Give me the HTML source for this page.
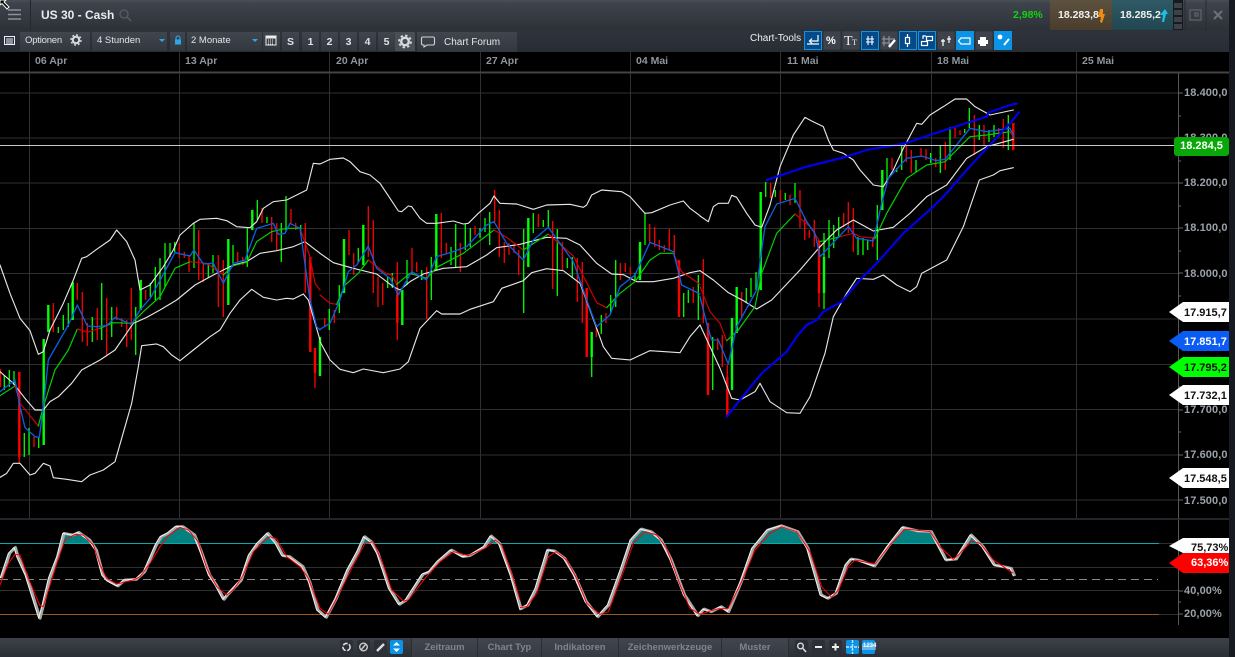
<!DOCTYPE html>
<html><head><meta charset="utf-8"><style>
html,body{margin:0;padding:0;background:#000;width:1235px;height:657px;overflow:hidden;font-family:"Liberation Sans",sans-serif}
.a{position:absolute;white-space:nowrap}
#top{left:0;top:0;width:1229px;height:31px;background:linear-gradient(#4a4f56 0,#3f444c 3px,#2c3138 100%)}
#row{left:0;top:31px;width:1229px;height:21px;background:linear-gradient(#2f343c,#282d34)}
#strip{left:1229px;top:0;width:6px;height:657px;background:#171a20}
.b{position:absolute;top:32px;height:19px;background:linear-gradient(#41464e,#33383f);color:#dfe2e6;font-size:10.5px;line-height:21px;text-align:center}
.t{position:absolute;font-size:10.5px;color:#8f959d;font-weight:bold;transform:scaleY(.95)}
.p{position:absolute;left:1184px;font-size:11px;color:#9ba1a9;font-weight:bold;letter-spacing:.1px}
.m{position:absolute;left:1184px;width:44px;font-size:11px;font-weight:bold;color:#111;text-align:left;line-height:20px}
#bot{left:0;top:638px;width:1229px;height:19px;background:linear-gradient(#3d424a,#2a2e35)}
.tab{position:absolute;top:638px;height:19px;line-height:19px;color:#7f858d;font-size:9.5px;font-weight:bold;text-align:center;background:linear-gradient(#41464e,#363b42);border-left:1px solid #2a2e34;box-sizing:border-box}
.ib{position:absolute;top:640px;width:13px;height:14px;background:#2c3036;border-radius:2px}
</style></head><body>
<div class="a" id="top"></div>
<div class="a" id="row"></div>
<div class="a" id="strip"></div>
<div class="a" style="left:30px;top:0;width:1px;height:30px;background:#24282e"></div>
<div class="a" style="left:41px;top:7px;color:#e9ebee;font-weight:bold;font-size:12px;line-height:16px">US 30 - Cash</div>
<div class="a" style="left:1013px;top:8px;color:#12d312;font-weight:bold;font-size:10.5px;line-height:14px">2,98%</div>
<div class="a" style="left:1050px;top:0;width:62px;height:30px;background:linear-gradient(#5d513f,#4a3d2b)"></div>
<div class="a" style="left:1112px;top:0;width:61px;height:30px;background:linear-gradient(#2f5a66,#214650)"></div>
<div class="a" style="left:1058px;top:8px;color:#f1f1f1;font-weight:bold;font-size:10.5px;line-height:14px">18.283,8</div>
<div class="a" style="left:1120px;top:8px;color:#f1f1f1;font-weight:bold;font-size:10.5px;line-height:14px">18.285,2</div>

<div class="b" style="left:20px;width:70px;z-index:0"></div>
<div class="a" style="left:25px;top:34px;color:#e2e4e8;font-size:9.5px;letter-spacing:-.2px;line-height:14px;z-index:2">Optionen</div>
<div class="b" style="left:92px;width:75px"></div>
<div class="a" style="left:97px;top:34px;color:#e2e4e8;font-size:9.5px;line-height:14px;z-index:2">4 Stunden</div>
<div class="b" style="left:170px;width:15px"></div>
<div class="b" style="left:187px;width:75px"></div>
<div class="a" style="left:191px;top:34px;color:#e2e4e8;font-size:9.5px;line-height:14px;z-index:2">2 Monate</div>
<div class="b" style="left:263px;width:17px"></div>
<div class="b" style="left:282px;width:17px;font-weight:bold">S</div>
<div class="b" style="left:302px;width:17px;font-weight:bold">1</div>
<div class="b" style="left:321px;width:17px;font-weight:bold">2</div>
<div class="b" style="left:340px;width:17px;font-weight:bold">3</div>
<div class="b" style="left:359px;width:17px;font-weight:bold">4</div>
<div class="b" style="left:378px;width:17px;font-weight:bold">5</div>
<div class="b" style="left:395px;width:20px;background:#4a4f56"></div>
<div class="b" style="left:417px;width:100px;height:20px"></div>
<div class="a" style="left:444px;top:36px;color:#e2e4e8;font-size:10px;line-height:14px;z-index:2">Chart Forum</div>
<div class="a" style="left:750px;top:32px;color:#eef0f3;font-size:10px;line-height:14px">Chart-Tools</div>

<!-- tool buttons -->
<svg class="a" style="left:0;top:0;z-index:3" width="1235" height="52" viewBox="0 0 1235 52">
<g fill="none" stroke="#8b9097" stroke-width="1.6"><path d="M8 10H21M8 14.5H21M8 19H21"/></g>
<path d="M0 0L0 5L2 3.5L7 9L9 7L4 2L6 0Z" fill="#000" stroke="#fff" stroke-width="1"/>
<g fill="none" stroke="#555a61" stroke-width="1.4"><circle cx="124" cy="14" r="4"/><path d="M127 17L131 21"/></g>
<!-- arrows -->
<path d="M1100 9h3v5h2l-3 9-2-1 1-5h-3z" fill="#f08a10"/>
<path d="M1162 22l1-7h-3l5-6 3 5h-2l-2 8z" fill="#1bc0e6"/>
<g fill="#171a1f"><rect x="1173" y="0" width="10" height="30"/></g>
<g fill="#3d4249"><rect x="1174" y="3" width="8" height="5"/><rect x="1174" y="10" width="8" height="5"/><rect x="1174" y="17" width="8" height="5"/><rect x="1174" y="24" width="8" height="5"/></g>
<path d="M1185 0V30M1206 0V30" stroke="#272b31"/>
<g fill="none" stroke="#5d6269" stroke-width="1.3"><rect x="1190" y="10" width="11" height="10"/><rect x="1195" y="13" width="3" height="3"/></g>
<path d="M1214 11L1222 19M1222 11L1214 19" stroke="#6c7178" stroke-width="2"/>
<!-- list -->
<g fill="none" stroke="#eef" stroke-width="1"><rect x="4.5" y="36.5" width="10" height="8"/><path d="M6 39H13M6 41H13M6 43H13"/></g>
<!-- gears -->
<circle cx="76" cy="40" r="3.2" fill="none" stroke="#d8dbe0" stroke-width="2"/>
<circle cx="76" cy="40" r="5" fill="none" stroke="#d8dbe0" stroke-width="1.4" stroke-dasharray="2 1.9"/>
<circle cx="405" cy="41.5" r="3.8" fill="none" stroke="#d8dbe0" stroke-width="2.4"/>
<circle cx="405" cy="41.5" r="6" fill="none" stroke="#d8dbe0" stroke-width="1.8" stroke-dasharray="2.4 2.3"/>
<!-- dropdown arrows -->
<path d="M159 39h6l-3 3z M252 39h6l-3 3z" fill="#2aa8ee"/>
<!-- lock -->
<rect x="175" y="39.5" width="6" height="5" fill="#2aa8ee"/><path d="M176 39.5v-1.5a2 2 0 0 1 4 0v1.5" fill="none" stroke="#2aa8ee" stroke-width="1.1"/>
<!-- calendar -->
<rect x="266" y="36" width="10" height="9" fill="none" stroke="#eee"/><rect x="266" y="36" width="10" height="2.5" fill="#eee"/><path d="M268 40h6M268 42h6M268 44h6" stroke="#eee" stroke-dasharray="1 1"/>
<!-- bubble -->
<path d="M423 37h10a1.5 1.5 0 0 1 1.5 1.5v5a1.5 1.5 0 0 1-1.5 1.5h-6l-3 2v-2h-1a1.5 1.5 0 0 1-1.5-1.5v-5a1.5 1.5 0 0 1 1.5-1.5z" fill="none" stroke="#cfd3d8" stroke-width="1.1"/>
<!-- chart tools -->
<g stroke="#0c94e6" stroke-width="1">
<rect x="804.5" y="31.5" width="17" height="18" fill="#054a88"/>
<rect x="823.5" y="31.5" width="17" height="18" fill="#3e434b" stroke="none"/>
<rect x="842.5" y="31.5" width="17" height="18" fill="#3e434b" stroke="none"/>
<rect x="861.5" y="31.5" width="17" height="18" fill="#054a88"/>
<rect x="880.5" y="31.5" width="17" height="18" fill="#3e434b" stroke="none"/>
<rect x="899.5" y="31.5" width="17" height="18" fill="#054a88"/>
<rect x="918.5" y="31.5" width="17" height="18" fill="#054a88"/>
<rect x="937.5" y="31.5" width="17" height="18" fill="#3e434b" stroke="none"/>
<rect x="956.5" y="31.5" width="17" height="18" fill="#0a94e8"/>
<rect x="975.5" y="31.5" width="17" height="18" fill="#3e434b" stroke="none"/>
<rect x="994.5" y="31.5" width="17" height="18" fill="#0a94e8"/>
</g>
<g stroke="#fff" fill="none" stroke-width="1.2">
<path d="M807 44H819M818 35V41H810M812 38.5L809.5 41L812 43.5"/>
<path d="M866 40H874M866 43H874M868 37V46M872 37V46" stroke-width="1.1" transform="translate(0,-1)"/>
<path d="M884 36V46M889 36V46M882 39H895M882 43H890" stroke="#8a8f96"/>
<path d="M889 47L895 40" stroke-width="2.4"/>
<rect x="905.5" y="37.5" width="4" height="6"/><path d="M907.5 34V37M907.5 44V47"/>
<rect x="921.5" y="41.5" width="6" height="4"/><rect x="926.5" y="36.5" width="6" height="4"/><path d="M923 39V36H926"/>
<path d="M943 39V46M949 36V43M941 41H945M947 39H951" />
<path d="M961 38H970V44H961L958.5 41Z"/>
<path d="M1004 45L1009 39" stroke-width="2"/>
</g>
<path d="M980 37h6v3h-6z M978 40h10v4h-10z M980 44h6v2h-6z" fill="#fff"/>
<circle cx="1000" cy="37" r="2.4" fill="#fff"/>
<text x="826" y="44" font-size="11" font-weight="bold" fill="#fff" font-family="Liberation Sans">%</text>
<text x="844" y="45" font-size="14" fill="#eee" font-family="Liberation Serif">T</text>
<text x="852" y="45" font-size="8" fill="#eee" font-family="Liberation Serif">T</text>
</svg>

<!-- time axis -->
<div class="t" style="left:35px;top:55px">06 Apr</div>
<div class="t" style="left:185px;top:55px">13 Apr</div>
<div class="t" style="left:336px;top:55px">20 Apr</div>
<div class="t" style="left:486px;top:55px">27 Apr</div>
<div class="t" style="left:636px;top:55px">04 Mai</div>
<div class="t" style="left:787px;top:55px">11 Mai</div>
<div class="t" style="left:937px;top:55px">18 Mai</div>
<div class="t" style="left:1082px;top:55px">25 Mai</div>

<svg class="a" style="left:0;top:0" width="1229" height="640" viewBox="0 0 1229 640" fill="none">
<g stroke="#303030" stroke-width="1">
<path d="M29.5 52V519M179.5 52V519M329.5 52V519M480.5 52V519M630.5 52V519M780.5 52V519M931.5 52V519M1076.5 52V519"/>
<path d="M0 93H1178M0 138H1178M0 183H1178M0 228.5H1178M0 273.5H1178M0 319H1178M0 364.5H1178M0 409.5H1178M0 455H1178M0 500H1178"/>
<path d="M0 567.5H1178M0 590.5H1178M1159 543.5H1178M1159 614.5H1178"/>
</g>
<path d="M0 72.5H1229" stroke="#444" stroke-width="2"/>
<path d="M0 519H1229" stroke="#22262c" stroke-width="2"/>
<path d="M1178.5 73V519M1178.5 520V625" stroke="#555"/>
<path d="M1178 93h5M1178 116h3M1178 138h5M1178 161h3M1178 183h5M1178 206h3M1178 228h5M1178 251h3M1178 273h5M1178 296h3M1178 319h5M1178 342h3M1178 364h5M1178 387h3M1178 410h5M1178 432h3M1178 455h5M1178 477h3M1178 500h5M1178 591h5M1178 568h3M1178 602h3M1178 614h5" stroke="#666"/>

<!-- candles green -->
<path stroke="#0f0" stroke-width="1.3" d="M4.3 375V390M9.3 370V387M14 371V385M24.3 433V457M29 428V455M38.7 438V448M58.3 327V333M63.3 315V330M68.3 303V327M92.3 317V342M101.7 283V340M111.7 307V337M135.7 307V355M150.3 283V297M155.3 267V300M160 258V300M165 243V287M170 243V257M174.7 242V252M194 223V268M208.3 263V278M213 255V273M233 245V265M247.3 228V267M257.3 200V220M267 217V223M281.3 223V262M286 196V232M300.7 225V235M329.3 309V330M339.3 285V313M358.3 248V263M387.7 277V288M392.3 273V288M407 260V285M421.7 270V280M431.3 257V300M451 247V265M455.7 224V268M465.3 224V250M470.3 228V247M480 228V238M485 218V232M489.7 212V245M523.7 229V313M533.3 213V233M543.3 220V227M548.3 210V227M557.3 229V296M567.3 258V268M572.3 257V278M591.7 332V377M601.3 315V334M610.7 295V313M615.7 260V307M635 273V282M645 213V245M683.7 293V317M688.3 290V303M698.3 275V320M712.7 337V390M746.3 288V303M751 278V297M756 272V290M765.7 182V197M775.3 190V197M785.3 193V200M795 183V203M824 233V309M829 220V258M833.7 225V248M838.7 217V237M858 237V255M863 238V255M867.7 240V250M877.3 205V260M887 158V180M896.7 168V172M901.7 145V170M916 160V172M930.7 153V163M940.3 145V173M950 127V160M964.7 129V133M969.3 108V128M979.3 125V140M989 130V142M994 125V137M1008.3 115V150"/>
<path stroke="#0f0" stroke-width="2.4" d="M43.7 339V445M48.3 305V332M72.7 282V320M140.7 280V310M228.3 239V305M252.3 210V230M320 337V376M344 239V293M363.3 225V265M402.3 290V325M436.3 214V270M528.3 218V267M591.7 332V357M640 242V280M732 318V390M736.7 287V333M760.7 192V290M824 257V293M882.3 170V210"/>
<!-- candles red -->
<path stroke="#f00" stroke-width="1.3" d="M.5 369V387M19.3 372V463M34 437V447M53.3 303V332M77.3 283V300M82.3 292V342M87.3 323V346M97.3 308V340M106.7 298V355M116.7 307V320M121.7 318V327M126.7 320V347M131.3 288V340M145.7 290V300M179.3 243V258M184.3 252V258M189 255V272M198.7 230V280M203.3 263V282M218.3 255V307M223.3 260V317M237.7 252V262M242.7 257V265M262 208V223M271.7 217V242M276.7 223V250M291 209V223M295.7 223V230M305.3 223V293M315 348V388M324.7 318V327M334.3 310V323M349 230V255M353.7 253V275M368.3 206V257M373.3 220V293M378 277V307M382.7 283V305M397.3 262V340M412 248V275M416.7 262V272M426.7 267V319M441.3 213V258M446.3 243V253M460.3 243V272M475 226V235M494.7 190V222M499.3 210V257M504.3 242V263M509 243V255M514 245V253M518.7 250V275M538.3 214V227M552.7 221V289M562.3 242V270M577.3 258V302M582.3 262V323M596.3 327V337M606 313V323M620.3 263V280M625.3 263V272M630.3 267V275M649.7 224V243M654.7 227V247M659.3 240V250M664.3 245V252M669.3 229V250M674.3 235V257M693.3 287V303M703.3 259V323M717.7 338V350M722.3 335V367M727.3 365V415M741.7 292V317M770.7 183V198M780.3 190V202M790 195V205M800 190V228M804.7 217V240M809.3 230V238M814.3 220V247M819 240V307M843.7 213V227M848.3 202V233M853.3 208V252M872.7 237V247M892 158V170M906.3 145V162M911.3 150V173M921 148V157M926 149V160M935.7 158V167M945.3 142V170M955 128V138M960 130V135M974.3 115V155M984 125V145M998.7 128V137M1003.3 119V148"/>
<path stroke="#f00" stroke-width="2.4" d="M19.3 372V457M310.3 257V352M315 348V373M397.3 290V323M586.7 288V357M679 260V317M708 323V395M727.3 377V415M819 240V293M1013.3 123V150"/>

<!-- Section 1: zoom coords -->
<g transform="translate(0,200) scale(.33333)" stroke-linejoin="round" stroke-linecap="round">
<g stroke="#e6e6e6" stroke-width="3.4">
<path d="M0 195L30 280 60 355 90 392 115 463 130 455 150 390 190 310 220 240 245 175 260 170 290 148 330 120 350 90 380 125 405 180 420 270 450 255 490 200 520 150 540 105 580 70 600 58 650 55 680 62 710 80 750 83 770 65 790 25 820 5 860 0 890 -15 920 -30 940 -110 960 -108"/>
<path d="M0 515L40 550 75 595 105 630 130 630 150 605 175 590 215 550 245 510 300 480 345 450 400 370 440 352 480 330 530 300 585 255 640 225 700 195 740 185 780 160 830 152 880 140 915 125 960 160"/>
<path d="M0 832L20 820 40 790 60 790 90 825 105 820 130 790 150 798 160 833 200 838 245 845 270 825 310 810 345 785 375 680 395 610 415 500 425 437 470 432 490 440 515 465 540 482 580 450 630 410 660 390 690 340 720 300 755 268 790 292 830 300 860 295 880 297 910 282 925 300 960 420"/>
</g>
<g stroke-width="3.6">
<path stroke="#00d000" d="M0 587L45 558"/>
<path stroke="#d00000" d="M45 558L60 610 115 678"/>
<path stroke="#00d000" d="M115 678L130 620 165 510 205 450 232 387"/>
<path stroke="#d00000" d="M232 387L262 397 300 385"/>
<path stroke="#00d000" d="M300 385L340 368 395 370 430 335 480 290 525 205 570 185"/>
<path stroke="#d00000" d="M570 185L620 190 670 225"/>
<path stroke="#00d000" d="M670 225L700 197 740 187 770 125 815 95 860 85 900 85"/>
<path stroke="#d00000" d="M900 85L930 170 945 250 960 270"/>
</g>
<path stroke="#0a5fe0" stroke-width="4" d="M0 575L45 540 60 620 75 683 105 710 118 712 130 620 145 480 205 375 232 315 262 378 290 380 320 377 345 352 395 373 420 330 452 293 525 158 570 168 582 150 610 192 640 190 670 250 700 190 735 180 770 85 820 70 835 103 855 100 870 70 900 85 930 300 950 380 960 390"/>
</g>
<!-- Section 2 -->
<g transform="translate(320,150) scale(.33333)" stroke-linejoin="round" stroke-linecap="round">
<g stroke="#e6e6e6" stroke-width="3.4">
<path d="M0 42L30 28 70 24 90 35 120 65 150 75 180 100 210 145 235 183 245 185 265 168 275 170 300 205 320 220 350 220 400 213 430 222 445 220 475 190 510 160 522 138 540 160 590 162 640 178 680 165 750 163 790 172 800 165 815 135 845 120 905 125 930 140 975 190 995 188 1050 165 1090 153 1110 175 1140 197"/>
<path d="M0 310L40 338 100 355 170 372 220 410 240 420 270 395 310 372 370 355 440 350 500 315 530 293 600 283 680 262 740 265 780 285 830 340 875 372 910 374 950 395 1000 395 1060 385 1110 368 1140 362"/>
<path d="M0 575L30 630 60 658 100 668 130 657 190 668 240 657 265 635 300 535 350 482 365 492 420 492 450 478 520 455 545 415 610 392 635 368 680 356 730 362 780 400 810 480 850 590 875 625 930 630 990 602 1080 608 1110 560 1140 525"/>
</g>
<g stroke-width="3.6">
<path stroke="#d00000" d="M0 435L30 460 50 463"/>
<path stroke="#00d000" d="M50 463L75 405 115 370 145 330"/>
<path stroke="#d00000" d="M145 330L200 372 215 375 230 403"/>
<path stroke="#00d000" d="M230 403L270 370 320 385 350 352 430 310 522 240"/>
<path stroke="#d00000" d="M522 240L560 262 610 300"/>
<path stroke="#00d000" d="M610 300L685 252"/>
<path stroke="#d00000" d="M685 252L760 318 830 458 860 473"/>
<path stroke="#00d000" d="M860 473L900 430 945 395 990 330 1020 310 1060 310"/>
<path stroke="#d00000" d="M1060 310L1085 365 1140 403"/>
</g>
<path stroke="#0a5fe0" stroke-width="4" d="M0 538L30 520 60 450 85 365 110 345 145 288 170 355 210 385 235 435 275 365 320 390 350 320 400 305 440 290 500 225 522 215 560 280 610 330 640 270 685 232 760 335 800 450 830 530 870 495 900 410 945 375 990 277 1060 305 1085 405 1140 432"/>
</g>
<!-- Section 3 -->
<g transform="translate(700,90) scale(.33333)" stroke-linejoin="round" stroke-linecap="round">
<g stroke="#e6e6e6" stroke-width="3.4">
<path d="M0 378L25 395 40 350 55 340 85 340 95 316 110 322 140 370 165 405 185 412 210 345 240 230 280 135 315 82 335 93 370 110 385 150 400 180 430 190 460 210 480 240 520 285 550 290 580 240 610 175 650 100 665 103 690 75 730 50 765 27 800 27 825 50 870 75 940 60"/>
<path d="M0 542L40 570 85 608 130 632 170 657 215 630 300 540 360 470 410 420 460 390 520 423 580 412 630 370 680 320 740 285 800 205 860 170 940 148"/>
<path d="M0 705L30 770 60 835 95 925 120 930 165 905 180 880 210 935 260 968 300 970 330 920 375 790 400 680 440 610 470 565 520 568 550 555 590 585 630 605 650 590 665 550 740 510 790 410 838 270 880 255 900 242 940 233"/>
</g>
<g stroke-width="3.6">
<path stroke="#d00000" d="M0 590L30 665 60 700 80 752"/>
<path stroke="#00d000" d="M80 752L115 720 165 650 185 550 230 430 285 372"/>
<path stroke="#d00000" d="M285 372L330 410 360 455"/>
<path stroke="#00d000" d="M360 455L420 440"/>
<path stroke="#d00000" d="M420 440L460 430 480 440 525 445"/>
<path stroke="#00d000" d="M525 445L560 370 620 265 680 225 735 215 770 180 810 140 860 135 930 125"/>
<path stroke="#d00000" d="M930 125L940 140"/>
</g>
<path stroke="#0a5fe0" stroke-width="4" d="M0 620L20 700 35 750 55 750 85 822 110 710 170 600 182 500 195 410 230 342 285 325 320 395 345 430 360 500 445 410 470 445 520 453 545 340 565 265 620 205 665 198 708 212 735 208 810 115 860 125 930 115 942 140"/>
<g stroke="#0000f0" stroke-width="6.4">
<path d="M200 270L320 230 440 200 500 180 615 160 750 115 860 80 865 68 940 42 950 41"/>
<path d="M80 980L120 930 185 850 260 785 290 740 320 705 350 690 370 665 425 635 480 570 530 520 610 430 700 350 735 315 800 240 860 175 930 100 957 67"/>
</g>
</g>
<!-- price line -->
<path d="M0 145.5H1175" stroke="#c8c8c8" stroke-width="1"/>

<!-- oscillator -->
<defs><clipPath id="c"><rect x="0" y="0" width="1235" height="543"/></clipPath></defs>
<path d="M0 543.5H1159" stroke="#0aa8a8" stroke-width="1"/>
<path d="M0 614.5H1159" stroke="#9a5a22" stroke-width="1"/>
<path d="M0 579.5H1158" stroke="#888" stroke-dasharray="8 5" stroke-width="1"/>
<g stroke-linejoin="round">
<g clip-path="url(#c)" fill="#048080" stroke="none">
<path transform="translate(0,515) scale(.33333)" d="M0 190L25 115 42 97 50 125 75 180 116 310 125 275 145 190 170 125 188 55 215 60 232 52 265 75 285 105 305 180 320 197 350 213 370 195 405 193 430 170 465 90 480 65 500 55 525 35 545 35 580 60 600 110 625 180 645 210 668 253 680 238 720 195 745 120 770 85 800 55 825 85 845 122 865 125 905 155 925 200 950 285 975 307 1005 250 1040 165 1070 110 1090 65 1110 80 1130 115 1165 220 1195 268 1215 255 1265 178 1285 170 1310 140 1350 105 1385 125 1405 122 1450 95 1470 63 1495 85 1530 180 1560 285V400H0Z"/>
<path transform="translate(520,515) scale(.33333)" d="M0 280L20 270 45 220 80 105 100 108 130 130 160 180 195 260 230 305 262 270 300 165 330 75 360 42 390 50 420 75 450 135 490 240 530 302 548 282 570 290 600 275 622 290 660 200 695 100 740 45 780 32 830 50 860 100 900 240 920 250 945 235 975 150 990 132 1010 135 1060 153 1100 95 1145 37 1190 48 1230 50 1275 135 1305 132 1350 60 1385 95 1420 150 1445 155 1470 160 1480 183V400H0Z"/>
</g>
<g stroke="#a8a8a8" fill="none">
<path transform="translate(1.5,515) scale(.33333)" stroke-width="8.4" d="M0 190L25 115 42 97 50 125 75 180 116 310 125 275 145 190 170 125 188 55 215 60 232 52 265 75 285 105 305 180 320 197 350 213 370 195 405 193 430 170 465 90 480 65 500 55 525 35 545 35 580 60 600 110 625 180 645 210 668 253 680 238 720 195 745 120 770 85 800 55 825 85 845 122 865 125 905 155 925 200 950 285 975 307 1005 250 1040 165 1070 110 1090 65 1110 80 1130 115 1165 220 1195 268 1215 255 1265 178 1285 170 1310 140 1350 105 1385 125 1405 122 1450 95 1470 63 1495 85 1530 180 1560 285"/>
<path transform="translate(521.5,515) scale(.33333)" stroke-width="8.4" d="M0 280L20 270 45 220 80 105 100 108 130 130 160 180 195 260 230 305 262 270 300 165 330 75 360 42 390 50 420 75 450 135 490 240 530 302 548 282 570 290 600 275 622 290 660 200 695 100 740 45 780 32 830 50 860 100 900 240 920 250 945 235 975 150 990 132 1010 135 1060 153 1100 95 1145 37 1190 48 1230 50 1275 135 1305 132 1350 60 1385 95 1420 150 1445 155 1470 160 1480 183"/>
</g>
<g stroke="#f4f4f4" stroke-width="3" fill="none">
<path transform="translate(0,515) scale(.33333)" d="M0 190L25 115 42 97 50 125 75 180 116 310 125 275 145 190 170 125 188 55 215 60 232 52 265 75 285 105 305 180 320 197 350 213 370 195 405 193 430 170 465 90 480 65 500 55 525 35 545 35 580 60 600 110 625 180 645 210 668 253 680 238 720 195 745 120 770 85 800 55 825 85 845 122 865 125 905 155 925 200 950 285 975 307 1005 250 1040 165 1070 110 1090 65 1110 80 1130 115 1165 220 1195 268 1215 255 1265 178 1285 170 1310 140 1350 105 1385 125 1405 122 1450 95 1470 63 1495 85 1530 180 1560 285"/>
<path transform="translate(520,515) scale(.33333)" d="M0 280L20 270 45 220 80 105 100 108 130 130 160 180 195 260 230 305 262 270 300 165 330 75 360 42 390 50 420 75 450 135 490 240 530 302 548 282 570 290 600 275 622 290 660 200 695 100 740 45 780 32 830 50 860 100 900 240 920 250 945 235 975 150 990 132 1010 135 1060 153 1100 95 1145 37 1190 48 1230 50 1275 135 1305 132 1350 60 1385 95 1420 150 1445 155 1470 160 1480 183"/>
</g>
<g stroke="#f00" stroke-width="3" fill="none">
<path transform="translate(0,515) scale(.33333)" d="M0 210L25 145 45 118 60 120 85 190 120 272 130 275 150 210 175 130 195 75 225 58 250 60 280 90 300 150 320 190 350 207 400 195 420 185 450 145 480 95 505 62 540 37 565 45 595 80 620 160 650 215 680 240 700 225 730 180 760 110 790 80 810 65 830 72 860 125 900 155 925 190 960 280 985 298 1015 240 1060 150 1095 85 1120 80 1150 150 1175 225 1210 258 1225 255 1275 190 1320 140 1360 110 1405 122 1455 100 1485 75 1505 90 1540 190 1560 255"/>
<path transform="translate(520,515) scale(.33333)" d="M0 278L20 275 50 235 85 125 108 110 140 135 170 190 200 265 240 298 265 290 310 170 340 85 375 50 410 60 440 100 480 210 510 280 540 298 590 282 625 280 665 200 705 105 750 55 785 35 830 50 870 110 905 215 935 247 955 225 985 155 1005 135 1065 147 1110 90 1155 42 1230 50 1260 95 1300 133 1320 115 1355 78 1380 85 1420 135 1450 155 1480 175"/>
</g>
</g>
</svg>

<!-- price axis labels -->
<div class="p" style="top:87px">18.400,0</div>
<div class="p" style="top:132px">18.300,0</div>
<div class="p" style="top:177px">18.200,0</div>
<div class="p" style="top:222px">18.100,0</div>
<div class="p" style="top:268px">18.000,0</div>
<div class="p" style="top:404px">17.700,0</div>
<div class="p" style="top:449px">17.600,0</div>
<div class="p" style="top:495px">17.500,0</div>
<div class="p" style="top:585px">40,00%</div>
<div class="p" style="top:608px">20,00%</div>

<!-- markers -->
<div class="a" style="left:1174px;top:137px;width:55px;height:19px;background:#08a808;border-radius:3px;color:#fff;font-size:11px;font-weight:bold;text-align:center;line-height:19px">18.284,5</div>
<svg class="a" style="left:1165px;top:296px" width="64" height="280" viewBox="1165 296 64 280">
<path d="M1183 302H1229V322H1183L1169 312Z" fill="#fff"/>
<path d="M1183 331H1229V351H1183L1169 341Z" fill="#0a5cf5"/>
<path d="M1183 357H1229V377H1183L1169 367Z" fill="#0f0"/>
<path d="M1183 385H1229V405H1183L1169 395Z" fill="#fff"/>
<path d="M1183 468H1229V488H1183L1169 478Z" fill="#fff"/>
<path d="M1183 538H1229V553H1183L1169 546Z" fill="#fff"/>
<path d="M1183 553H1229V573H1183L1169 563Z" fill="#f00"/>
</svg>
<div class="m" style="top:303px">17.915,7</div>
<div class="m" style="top:332px;color:#fff">17.851,7</div>
<div class="m" style="top:358px">17.795,2</div>
<div class="m" style="top:386px">17.732,1</div>
<div class="m" style="top:469px">17.548,5</div>
<div class="m" style="top:538px;left:1191px;width:38px">75,73%</div>
<div class="m" style="top:553px;left:1191px;width:38px;color:#fff">63,36%</div>

<!-- bottom bar -->
<div class="a" id="bot"></div>
<div class="ib" style="left:340px"></div><div class="ib" style="left:357px"></div><div class="ib" style="left:374px"></div>
<div class="ib" style="left:390px;background:#0a94e8"></div>
<div class="tab" style="left:411px;width:66px">Zeitraum</div>
<div class="tab" style="left:477px;width:64px">Chart Typ</div>
<div class="tab" style="left:541px;width:77px">Indikatoren</div>
<div class="tab" style="left:618px;width:103px">Zeichenwerkzeuge</div>
<div class="tab" style="left:721px;width:68px;border-right:1px solid #2a2e34">Muster</div>
<div class="ib" style="left:795px"></div><div class="ib" style="left:812px"></div><div class="ib" style="left:829px"></div>
<div class="ib" style="left:846px;background:#0a94e8"></div><div class="ib" style="left:862px;background:#0a94e8"></div>
<svg class="a" style="left:0;top:636px" width="1229" height="21" viewBox="0 636 1229 21" fill="none">
<circle cx="346.5" cy="647" r="3.6" stroke="#ddd" stroke-width="1.6" stroke-dasharray="5 1.5"/>
<circle cx="363.5" cy="647" r="3.8" stroke="#ccc" stroke-width="1.4"/><path d="M361 650L366 644" stroke="#ccc" stroke-width="1.4"/>
<path d="M377 651L384 644" stroke="#ddd" stroke-width="2.4"/>
<path d="M393 645.5l3.5-3.5 3.5 3.5z M393 648.5h7l-3.5 3.5z" fill="#fff"/>
<circle cx="800.5" cy="646" r="2.8" stroke="#ddd" stroke-width="1.4"/><path d="M803 648.5L806 652" stroke="#ddd" stroke-width="1.6"/>
<path d="M815 647H822" stroke="#eee" stroke-width="2"/>
<path d="M832 647H839M835.5 643.5V650.5" stroke="#eee" stroke-width="2"/>
<path d="M852.5 640V654M846 647H859" stroke="#bfe6ff" stroke-width="1.4" stroke-dasharray="3 1"/>
<rect x="862" y="644" width="14" height="6" fill="#fff" opacity=".35"/>
</svg>
<div class="a" style="left:863px;top:642px;font-size:6px;font-weight:bold;color:#fff;line-height:9px;z-index:2">1234</div>
</body></html>
